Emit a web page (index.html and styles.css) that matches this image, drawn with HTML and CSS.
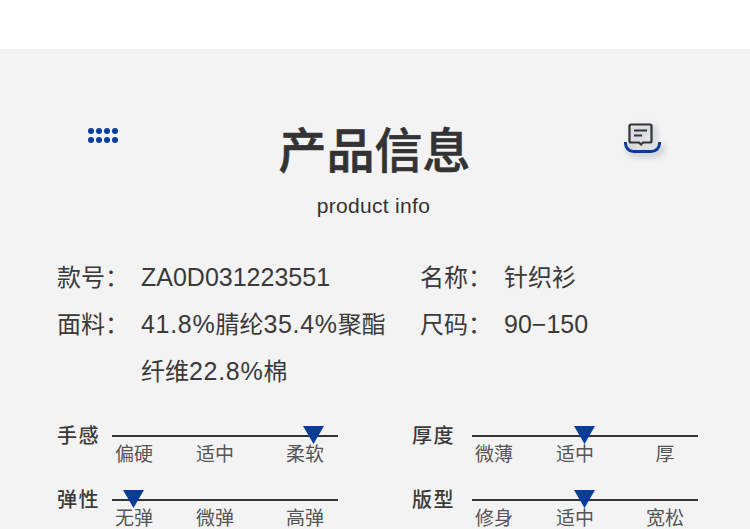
FILE: index.html
```html
<!DOCTYPE html>
<html lang="zh-CN">
<head>
<meta charset="utf-8">
<title>产品信息</title>
<link rel="stylesheet" href="styles.css">
</head>
<body>
<div class="top"></div>
<main class="panel">
  <header class="head">
    <div class="dots"><i></i><i></i><i></i><i></i><i></i><i></i><i></i><i></i></div>
    <div class="titles">
      <h1>产品信息</h1>
      <p>product info</p>
    </div>
    <svg class="note" width="40" height="34" viewBox="0 0 40 34">
      <path d="M7 1.500h19a1.500 1.500 0 0 1 1.500 1.500v15a1.500 1.500 0 0 1-1.500 1.500h-7l-2 2-2-2H7a1.500 1.500 0 0 1-1.500-1.500V3A1.500 1.500 0 0 1 7 1.500z" fill="none" stroke="#333" stroke-width="2.200"/>
      <path d="M10 7.500h13M10 12.500h8" fill="none" stroke="#333" stroke-width="2"/>
      <path d="M1.500 19v1.500a8 8 0 0 0 8 8h18a8 8 0 0 0 8-8V19" fill="none" stroke="#0a3d9a" stroke-width="3"/>
    </svg>
  </header>
  <section class="info">
    <div class="row"><span class="key">款号：</span><span class="val lat">ZA0D031223551</span></div>
    <div class="row"><span class="key">名称：</span><span class="val">针织衫</span></div>
    <div class="row"><span class="key">面料：</span><span class="val"><span class="num">41.8%</span>腈纶<span class="num">35.4%</span>聚酯纤维<span class="num">22.8%</span>棉</span></div>
    <div class="row"><span class="key">尺码：</span><span class="val lat">90−150</span></div>
  </section>
  <section class="scales">
    <div class="scale"><b>手感</b><div class="track"><i class="mark" style="left:191px"></i><span>偏硬</span><span>适中</span><span>柔软</span></div></div>
    <div class="scale alt"><b>厚度</b><div class="track"><i class="mark" style="left:102px"></i><span>微薄</span><span>适中</span><span>厚</span></div></div>
    <div class="scale"><b>弹性</b><div class="track"><i class="mark" style="left:11px"></i><span>无弹</span><span>微弹</span><span>高弹</span></div></div>
    <div class="scale alt"><b>版型</b><div class="track"><i class="mark" style="left:102px"></i><span>修身</span><span>适中</span><span>宽松</span></div></div>
  </section>
</main>
</body>
</html>
```
FILE: styles.css
```css
* { box-sizing: border-box; margin: 0; padding: 0; }
html, body { height: 529px; overflow: hidden; }
body { background: #fff; color: #333; font-family: "Liberation Sans", "Noto Sans CJK SC", sans-serif; }
.top { height: 49px; }
.panel { height: 480px; background: #f3f3f3; padding-top: 71px; overflow: hidden; }
.head { display: grid; grid-template-columns: 88px 1fr 40px; padding: 8px 82px 0 88px; height: 120px; }
.dots { display: grid; grid-template-columns: repeat(4, 6px); grid-auto-rows: 6px; gap: 3px 2px; align-content: start; }
.dots i { background: #0a3d9a; border-radius: 50%; }
.titles { text-align: center; margin: -6px 0 0 -55px; }
h1 { font-size: 48px; line-height: 60px; font-weight: 500; color: #333; -webkit-text-stroke: .6px #333; }
.titles p { font-size: 21px; line-height: 26px; margin-top: 11px; padding-right: 2px; letter-spacing: .3px; }
.note { margin: -5px 0 0 -4px; filter: drop-shadow(3px 3px 3px rgba(40, 60, 110, .4)); }
.info { display: grid; grid-template-columns: 363px 1fr; padding: 14px 0 0 57px; font-size: 24px; line-height: 47px; color: #3a3a3a; }
.row { display: flex; }
.key { flex: 0 0 84px; }
.val { width: 252px; }
.lat { font-size: 25px; }
.num { font-size: 25px; letter-spacing: .7px; }
.scales { display: grid; grid-template-columns: 355px 1fr; grid-auto-rows: 64px; padding: 27px 0 0 57px; }
.scale { display: flex; }
.scale b { flex: 0 0 55px; font-size: 20px; line-height: 28px; letter-spacing: 1.500px; font-weight: 500; color: #3a3a3a; }
.alt b { flex-basis: 60px; }
.track { position: relative; width: 226px; height: 60px; display: grid; grid-template-columns: 44px 118px 62px; align-content: start; text-align: center; font-size: 19px; line-height: 24px; color: #555; padding-top: 21px; background: linear-gradient(#333, #333) 0 13px / 100% 2px no-repeat; }
.mark { position: absolute; top: 4px; width: 21px; height: 18px; background: #0a3d9a; clip-path: polygon(0 0, 100% 0, 50% 100%); }
```
